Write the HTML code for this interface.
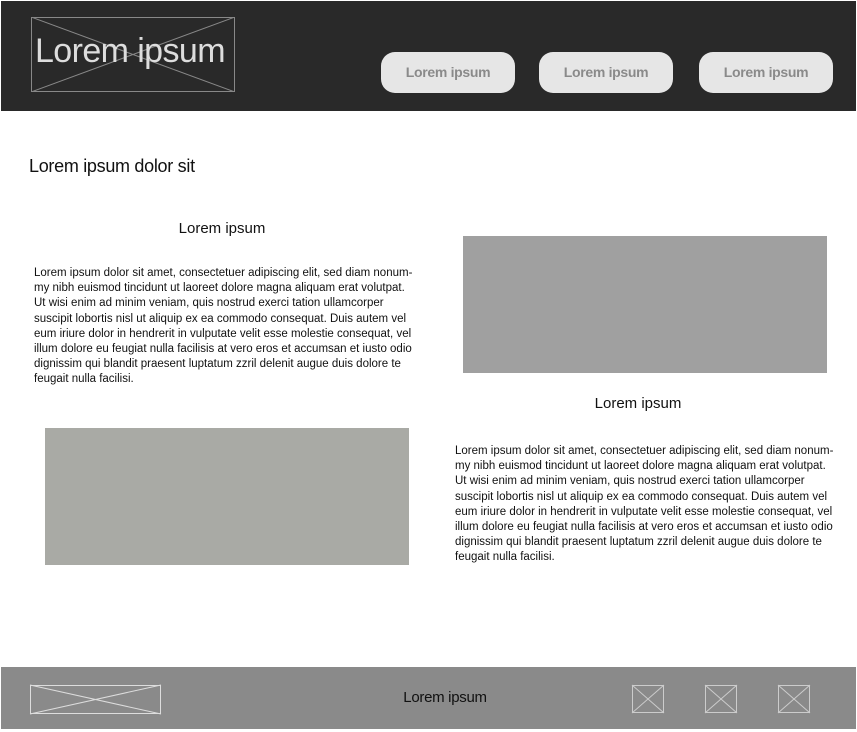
<!DOCTYPE html>
<html><head><meta charset="utf-8"><style>
*{margin:0;padding:0;box-sizing:border-box}
body{width:857px;height:732px;background:#fff;position:relative;overflow:hidden;font-family:"Liberation Sans",sans-serif}
.a{position:absolute}
.hdr{left:1px;top:1px;width:855px;height:110px;background:#292929}
.btn{top:52px;width:134px;height:41px;border-radius:14px;background:#e6e6e6;color:#8a8a8a;font-weight:bold;font-size:14px;text-align:center;line-height:41px;letter-spacing:-0.3px}
.p{font-size:11.5px;line-height:15.2px;color:#111;white-space:nowrap;letter-spacing:0}
.ftr{left:1px;top:667px;width:855px;height:62px;background:#8a8a8a}
</style></head><body>
<div class="a hdr"></div>
<svg class="a" style="left:31px;top:17px" width="204" height="75"><rect x="0.5" y="0.5" width="203" height="74" fill="none" stroke="#888"/><line x1="0" y1="0" x2="204" y2="75" stroke="#888"/><line x1="204" y1="0" x2="0" y2="75" stroke="#888"/></svg>
<div class="a" style="left:35px;top:32px;font-size:34px;color:#ddd;letter-spacing:-0.6px">Lorem ipsum</div>
<div class="a btn" style="left:381px">Lorem ipsum</div>
<div class="a btn" style="left:539px">Lorem ipsum</div>
<div class="a btn" style="left:699px">Lorem ipsum</div>

<div class="a" style="left:29px;top:156px;font-size:18px;color:#111;letter-spacing:-0.3px">Lorem ipsum dolor sit</div>
<div class="a" style="left:122px;width:200px;text-align:center;top:220px;font-size:15px;color:#111">Lorem ipsum</div>
<div class="a p" style="left:34px;top:266px">Lorem ipsum dolor sit amet, consectetuer adipiscing elit, sed diam nonum-<br>my nibh euismod tincidunt ut laoreet dolore magna aliquam erat volutpat.<br>Ut wisi enim ad minim veniam, quis nostrud exerci tation ullamcorper<br>suscipit lobortis nisl ut aliquip ex ea commodo consequat. Duis autem vel<br>eum iriure dolor in hendrerit in vulputate velit esse molestie consequat, vel<br>illum dolore eu feugiat nulla facilisis at vero eros et accumsan et iusto odio<br>dignissim qui blandit praesent luptatum zzril delenit augue duis dolore te<br>feugait nulla facilisi.</div>
<div class="a" style="left:45px;top:428px;width:364px;height:137px;background:#a9aaa5"></div>

<div class="a" style="left:463px;top:236px;width:364px;height:137px;background:#a0a0a0"></div>
<div class="a" style="left:538px;width:200px;text-align:center;top:395px;font-size:15px;color:#111">Lorem ipsum</div>
<div class="a p" style="left:455px;top:444px">Lorem ipsum dolor sit amet, consectetuer adipiscing elit, sed diam nonum-<br>my nibh euismod tincidunt ut laoreet dolore magna aliquam erat volutpat.<br>Ut wisi enim ad minim veniam, quis nostrud exerci tation ullamcorper<br>suscipit lobortis nisl ut aliquip ex ea commodo consequat. Duis autem vel<br>eum iriure dolor in hendrerit in vulputate velit esse molestie consequat, vel<br>illum dolore eu feugiat nulla facilisis at vero eros et accumsan et iusto odio<br>dignissim qui blandit praesent luptatum zzril delenit augue duis dolore te<br>feugait nulla facilisi.</div>

<div class="a ftr"></div>
<svg class="a" style="left:0;top:667px" width="857" height="62" fill="none" stroke="#ddd">
<rect x="30.5" y="18.5" width="130" height="28"/><line x1="30" y1="18" x2="161" y2="47"/><line x1="161" y1="18" x2="30" y2="47"/>
<g stroke="#ccc"><rect x="632.5" y="18.5" width="31" height="27"/><line x1="632" y1="18" x2="664" y2="46"/><line x1="664" y1="18" x2="632" y2="46"/>
<rect x="705.5" y="18.5" width="31" height="27"/><line x1="705" y1="18" x2="737" y2="46"/><line x1="737" y1="18" x2="705" y2="46"/>
<rect x="778.5" y="18.5" width="31" height="27"/><line x1="778" y1="18" x2="810" y2="46"/><line x1="810" y1="18" x2="778" y2="46"/></g>
</svg>
<div class="a" style="left:345px;width:200px;text-align:center;top:689px;font-size:15px;color:#111;letter-spacing:-0.3px">Lorem ipsum</div>
</body></html>
